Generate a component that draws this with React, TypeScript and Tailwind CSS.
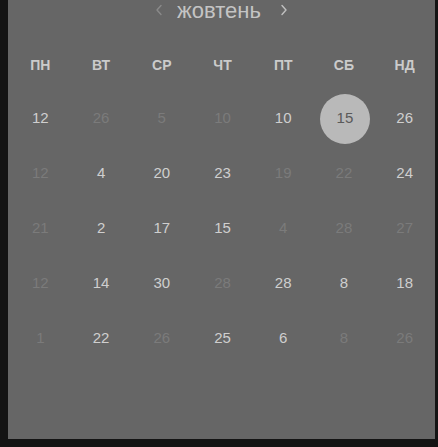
type Day = { n: number; dim?: boolean; selected?: boolean };

const weekdays = ['ПН', 'ВТ', 'СР', 'ЧТ', 'ПТ', 'СБ', 'НД'];

const weeks: Day[][] = [
  [{ n: 12 }, { n: 26, dim: true }, { n: 5, dim: true }, { n: 10, dim: true }, { n: 10 }, { n: 15, selected: true }, { n: 26 }],
  [{ n: 12, dim: true }, { n: 4 }, { n: 20 }, { n: 23 }, { n: 19, dim: true }, { n: 22, dim: true }, { n: 24 }],
  [{ n: 21, dim: true }, { n: 2 }, { n: 17 }, { n: 15 }, { n: 4, dim: true }, { n: 28, dim: true }, { n: 27, dim: true }],
  [{ n: 12, dim: true }, { n: 14 }, { n: 30 }, { n: 28, dim: true }, { n: 28 }, { n: 8 }, { n: 18 }],
  [{ n: 1, dim: true }, { n: 22 }, { n: 26, dim: true }, { n: 25 }, { n: 6 }, { n: 8, dim: true }, { n: 26, dim: true }],
];

function Chevron({ dir, className }: { dir: 'left' | 'right'; className?: string }) {
  return (
    <svg width="8" height="12" viewBox="0 0 8 12" fill="none" className={className}>
      <path
        d={dir === 'left' ? 'M6 1.5 L2 6 L6 10.5' : 'M2 1.5 L6 6 L2 10.5'}
        stroke="currentColor"
        strokeWidth="1.4"
        strokeLinecap="round"
        strokeLinejoin="round"
      />
    </svg>
  );
}

export default function App() {
  return (
    <div
      className="w-[438px] h-[447px] bg-[#141414] pl-[8px] pr-[3px] pb-[8px] overflow-hidden"
      style={{ fontFamily: '"Liberation Sans", Arial, sans-serif' }}
    >
      <div className="h-[439px] bg-[#666666]">
        {/* Month header */}
        <div className="h-[22px] flex items-center justify-center">
          <Chevron dir="left" className="text-[#8a8a8a] mr-[14px] -mt-[3px]" />
          <span className="text-[22px] leading-[22px] text-[#c4c4c4]">жовтень</span>
          <Chevron dir="right" className="text-[#c0c0c0] ml-[19px] -mt-[3px]" />
        </div>

        <div className="pl-[2px]">
          {/* Weekday names */}
          <div className="mt-[18px] grid grid-cols-7 h-[50px] items-center">
            {weekdays.map((d) => (
              <div key={d} className="text-center text-[14px] font-bold text-[#cbcbcb]">
                {d}
              </div>
            ))}
          </div>

          {/* Days */}
          {weeks.map((week, i) => (
            <div key={i} className={i === 0 ? 'grid grid-cols-7 h-[55px] items-center mt-[1px]' : 'grid grid-cols-7 h-[55px] items-center'}>
              {week.map((day, j) => (
                <div key={j} className="flex justify-center">
                  {day.selected ? (
                    <div className="ml-[2px] w-[50px] h-[50px] rounded-full bg-[#b9b9b9] flex items-center justify-center text-[15px] text-[#5a5a5a]">
                      {day.n}
                    </div>
                  ) : (
                    <span className={day.dim ? 'text-[15px] text-[#7b7b7b]' : 'text-[15px] text-[#cfcfcf]'}>
                      {day.n}
                    </span>
                  )}
                </div>
              ))}
            </div>
          ))}
        </div>
      </div>
    </div>
  );
}
